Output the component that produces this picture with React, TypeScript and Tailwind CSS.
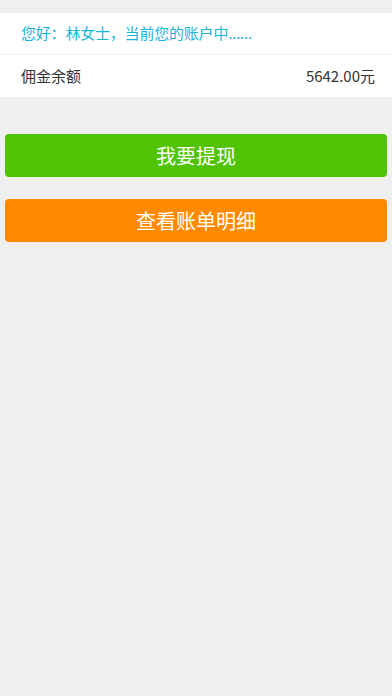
import React from "react";

export default function App() {
  const font = { fontFamily: '"Noto Sans CJK SC", "Noto Sans", sans-serif' };
  return (
    <div className="w-[392px] h-[696px] bg-[#efefef] pt-[13px]" style={font}>
      <div className="bg-white">
        <div className="h-[42px] flex items-center pl-[21px] pr-[17px] text-[15px] text-[#14b6d8] border-b border-[#ececec] tracking-[-0.2px]">
          您好：林女士，当前您的账户中......
        </div>
        <div className="h-[42px] flex items-center justify-between pl-[21px] pr-[17px] text-[15px] text-[#333]">
          <span>佣金余额</span>
          <span>5642.00元</span>
        </div>
      </div>
      <div className="px-[5px] pt-[37px] flex flex-col gap-[22px]">
        <button className="h-[43px] w-full rounded-[4px] bg-[#50c404] text-white text-[20px] flex items-center justify-center">
          我要提现
        </button>
        <button className="h-[43px] w-full rounded-[4px] bg-[#ff8a00] text-white text-[20px] flex items-center justify-center">
          查看账单明细
        </button>
      </div>
    </div>
  );
}
